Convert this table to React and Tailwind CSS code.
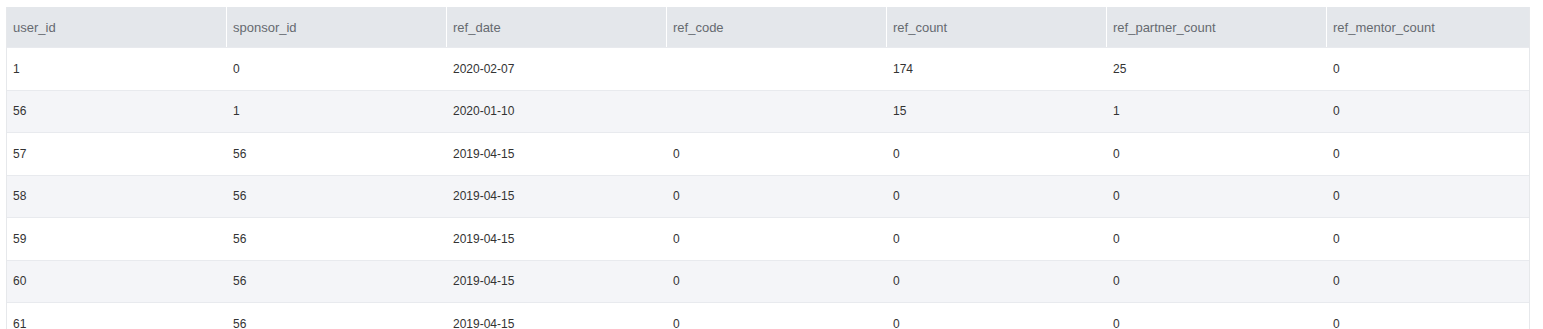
import React from 'react';

const columns = ['user_id', 'sponsor_id', 'ref_date', 'ref_code', 'ref_count', 'ref_partner_count', 'ref_mentor_count'];

const rows = [
  ['1', '0', '2020-02-07', '', '174', '25', '0'],
  ['56', '1', '2020-01-10', '', '15', '1', '0'],
  ['57', '56', '2019-04-15', '0', '0', '0', '0'],
  ['58', '56', '2019-04-15', '0', '0', '0', '0'],
  ['59', '56', '2019-04-15', '0', '0', '0', '0'],
  ['60', '56', '2019-04-15', '0', '0', '0', '0'],
  ['61', '56', '2019-04-15', '0', '0', '0', '0'],
];

const widths = ['w-[220px]', 'w-[220px]', 'w-[220px]', 'w-[220px]', 'w-[220px]', 'w-[220px]', 'w-[202px]'];

export default function App() {
  return (
    <div className="bg-white w-[1543px] h-[329px] overflow-hidden pt-[7px] pl-[6px]" style={{ fontFamily: '"Liberation Sans", Arial, sans-serif' }}>
      <div className="w-[1524px] border-x border-[#e6e8eb]">
        {/* Header */}
        <div className="flex h-[40px] bg-[#e4e7eb] text-[13px] text-[#666a70]">
          {columns.map((col, i) => (
            <div
              key={col}
              className={`${widths[i]} flex items-center pt-[1px] px-[6px] ${i < columns.length - 1 ? 'border-r border-white' : ''}`}
            >
              {col}
            </div>
          ))}
        </div>

        {/* Body */}
        {rows.map((row, r) => (
          <div
            key={r}
            className={`flex h-[42.5px] text-[12px] text-[#333] border-t border-[#e8eaee] first:border-t-0 ${r % 2 === 1 ? 'bg-[#f4f5f8]' : 'bg-white'}`}
          >
            {row.map((cell, i) => (
              <div key={i} className={`${widths[i]} flex items-center px-[6px]`}>
                {cell}
              </div>
            ))}
          </div>
        ))}
      </div>
    </div>
  );
}
